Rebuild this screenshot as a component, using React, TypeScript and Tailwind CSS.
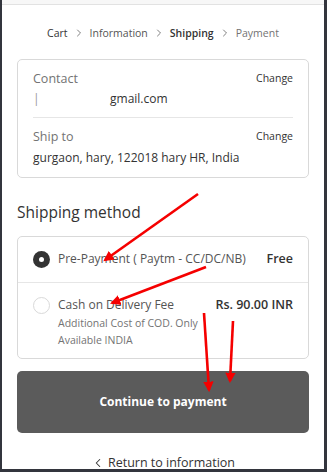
import { ChevronRight, ChevronLeft } from 'lucide-react';

const font = { fontFamily: '"Open Sans", "Noto Sans", Arial, sans-serif' };

function Arrows() {
  const lines = [
    { x1: 196, y1: 194, x2: 103, y2: 260 },
    { x1: 204, y1: 267, x2: 110, y2: 303 },
    { x1: 202, y1: 313, x2: 207, y2: 390 },
    { x1: 231, y1: 321, x2: 228, y2: 381 },
  ];
  return (
    <svg className="absolute inset-0 pointer-events-none" width={327} height={472}>
      <defs>
        <marker id="head" viewBox="0 0 10 10" refX="8" refY="5" markerWidth="4" markerHeight="4" orient="auto">
          <path d="M0 0 L10 5 L0 10 z" fill="#f50000" />
        </marker>
      </defs>
      {lines.map((l, i) => (
        <line key={i} {...l} stroke="#f50000" strokeWidth={2.6} markerEnd="url(#head)" />
      ))}
    </svg>
  );
}

export default function App() {
  return (
    <div
      className="relative w-[327px] h-[472px] overflow-hidden bg-white border-l-2 border-r-[3px] border-b-[3px] border-[#33353d] text-[#333]"
      style={font}
    >
      <div className="h-[5px] bg-[#f7f7f7] border-b border-[#e2e2e2]" />

      <div className="px-[15px]">
        <nav className="flex items-center justify-center gap-[5px] mt-[22px] text-[10.5px] leading-none">
          <span className="text-[#333]">Cart</span>
          <ChevronRight className="h-3 w-3 text-[#555]" strokeWidth={1.5} />
          <span className="text-[#545454]">Information</span>
          <ChevronRight className="h-3 w-3 text-[#555]" strokeWidth={1.5} />
          <span className="font-semibold text-[#333]">Shipping</span>
          <ChevronRight className="h-3 w-3 text-[#555]" strokeWidth={1.5} />
          <span className="text-[#737373]">Payment</span>
        </nav>

        <div className="mt-[20px] border border-[#d9d9d9] rounded-[5px] px-[15px]">
          <div className="pt-[10px] pb-[9px] border-b border-[#e6e6e6]">
            <div className="flex justify-between items-start">
              <span className="text-[12.5px] text-[#737373]">Contact</span>
              <span className="text-[10.5px] text-[#333] mt-[1px]">Change</span>
            </div>
            <div className="flex text-[12px] text-[#333] mt-[1px]">
              <span className="text-[#999] w-[77px]">|</span>
              <span>gmail.com</span>
            </div>
          </div>
          <div className="pt-[10px] pb-[10px]">
            <div className="flex justify-between items-start">
              <span className="text-[12.5px] text-[#737373]">Ship to</span>
              <span className="text-[10.5px] text-[#333] mt-[1px]">Change</span>
            </div>
            <div className="text-[12px] text-[#333] mt-[2px]">gurgaon, hary, 122018 hary HR, India</div>
          </div>
        </div>

        <h2 className="mt-[25px] text-[15.5px] text-[#333] leading-tight">Shipping method</h2>

        <div className="mt-[14px] border border-[#d9d9d9] rounded-[5px]">
          <div className="flex items-center h-[46px] px-[15px] border-b border-[#e6e6e6]">
            <span className="w-[17px] h-[17px] rounded-full bg-[#333] flex items-center justify-center shrink-0">
              <span className="w-[5px] h-[5px] rounded-full bg-white" />
            </span>
            <span className="ml-[8px] text-[12px] text-[#545454] flex-1">Pre-Payment ( Paytm - CC/DC/NB)</span>
            <span className="text-[12.5px] font-semibold text-[#333]">Free</span>
          </div>
          <div className="flex items-start px-[15px] pt-[13px] pb-[9px]">
            <span className="w-[17px] h-[17px] rounded-full border border-[#d9d9d9] shrink-0 mt-[1px]" />
            <div className="ml-[8px] flex-1">
              <div className="text-[12px] text-[#545454]">Cash on Delivery Fee</div>
              <div className="text-[10.5px] text-[#737373] leading-[17px] mt-[1px] w-[150px]">
                Additional Cost of COD. Only Available INDIA
              </div>
            </div>
            <span className="text-[12.5px] font-semibold text-[#333]">Rs. 90.00 INR</span>
          </div>
        </div>

        <button className="mt-[12px] w-full h-[62px] rounded-[5px] bg-[#5b5b5b] text-white text-[12px] font-bold">
          Continue to payment
        </button>

        <div className="mt-[21px] flex items-center justify-center gap-[3px] text-[12.5px] text-[#333]">
          <ChevronLeft className="h-3.5 w-3.5" strokeWidth={1.8} />
          <span>Return to information</span>
        </div>
      </div>

      <Arrows />
    </div>
  );
}
